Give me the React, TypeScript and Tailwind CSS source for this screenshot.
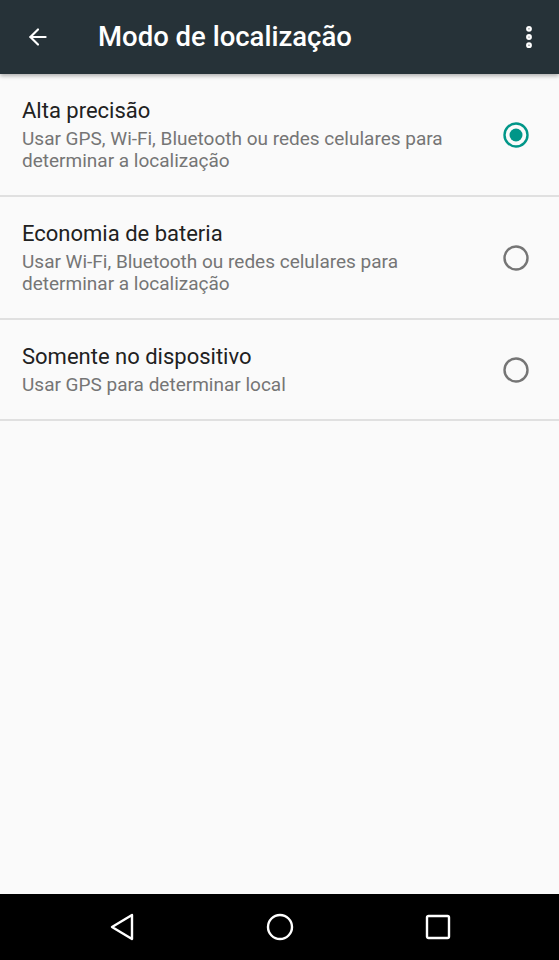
import { ArrowLeft, EllipsisVertical } from "lucide-react";

type Mode = {
  id: string;
  title: string;
  summary: string;
};

const modes: Mode[] = [
  {
    id: "high",
    title: "Alta precisão",
    summary: "Usar GPS, Wi-Fi, Bluetooth ou redes celulares para determinar a localização",
  },
  {
    id: "battery",
    title: "Economia de bateria",
    summary: "Usar Wi-Fi, Bluetooth ou redes celulares para determinar a localização",
  },
  {
    id: "device",
    title: "Somente no dispositivo",
    summary: "Usar GPS para determinar local",
  },
];

function Radio({ checked }: { checked: boolean }) {
  return (
    <svg width="28" height="28" viewBox="0 0 28 28" aria-hidden>
      <circle
        cx="14"
        cy="14"
        r="11.5"
        fill="none"
        stroke={checked ? "#009688" : "#757575"}
        strokeWidth="2.4"
      />
      {checked ? <circle cx="14" cy="14" r="6.5" fill="#009688" /> : null}
    </svg>
  );
}

export default function App() {
  const selected = "high";

  return (
    <div
      className="flex h-[960px] w-[559px] flex-col overflow-hidden bg-[#fafafa]"
      style={{ fontFamily: "Roboto, 'Noto Sans', sans-serif" }}
    >
      <header className="relative z-10 flex h-[74px] shrink-0 items-center bg-[#263238] shadow-[0_2px_4px_rgba(0,0,0,0.3)]">
        <button type="button" className="ml-[25px] flex h-[26px] w-[26px] items-center justify-center text-white">
          <ArrowLeft size={26} strokeWidth={2} aria-hidden />
        </button>
        <h1 className="ml-[47px] flex-1 text-[27.5px] font-medium leading-none text-white">
          Modo de localização
        </h1>
        <button type="button" className="mr-[16px] flex h-[28px] w-[28px] items-center justify-center text-white">
          <EllipsisVertical size={28} strokeWidth={3} aria-hidden />
        </button>
      </header>

      <main className="flex-1">
        {modes.map((mode) => (
          <div
            key={mode.id}
            className="flex items-center border-b-2 border-[#e0e0e0] pb-[23px] pl-[22px] pr-[29px] pt-[23px]"
          >
            <div className="min-w-0 flex-1 pr-[40px]">
              <div className="text-[22px] leading-[28px] text-[#212121]">{mode.title}</div>
              <div className="mt-[3px] text-[19px] leading-[22px] text-[#757575]">{mode.summary}</div>
            </div>
            <Radio checked={mode.id === selected} />
          </div>
        ))}
      </main>

      <nav className="flex h-[66px] shrink-0 items-center justify-center bg-black">
        <div className="flex w-[158px] justify-center">
          <svg width="28" height="30" viewBox="0 0 28 30" aria-hidden>
            <path d="M24 3 L4 15 L24 27 Z" fill="none" stroke="white" strokeWidth="2.4" strokeLinejoin="round" />
          </svg>
        </div>
        <div className="flex w-[158px] justify-center">
          <svg width="30" height="30" viewBox="0 0 30 30" aria-hidden>
            <circle cx="15" cy="15" r="12" fill="none" stroke="white" strokeWidth="2.4" />
          </svg>
        </div>
        <div className="flex w-[158px] justify-center">
          <svg width="26" height="26" viewBox="0 0 26 26" aria-hidden>
            <rect x="2" y="2" width="22" height="22" rx="1.5" fill="none" stroke="white" strokeWidth="2.4" />
          </svg>
        </div>
      </nav>
    </div>
  );
}
